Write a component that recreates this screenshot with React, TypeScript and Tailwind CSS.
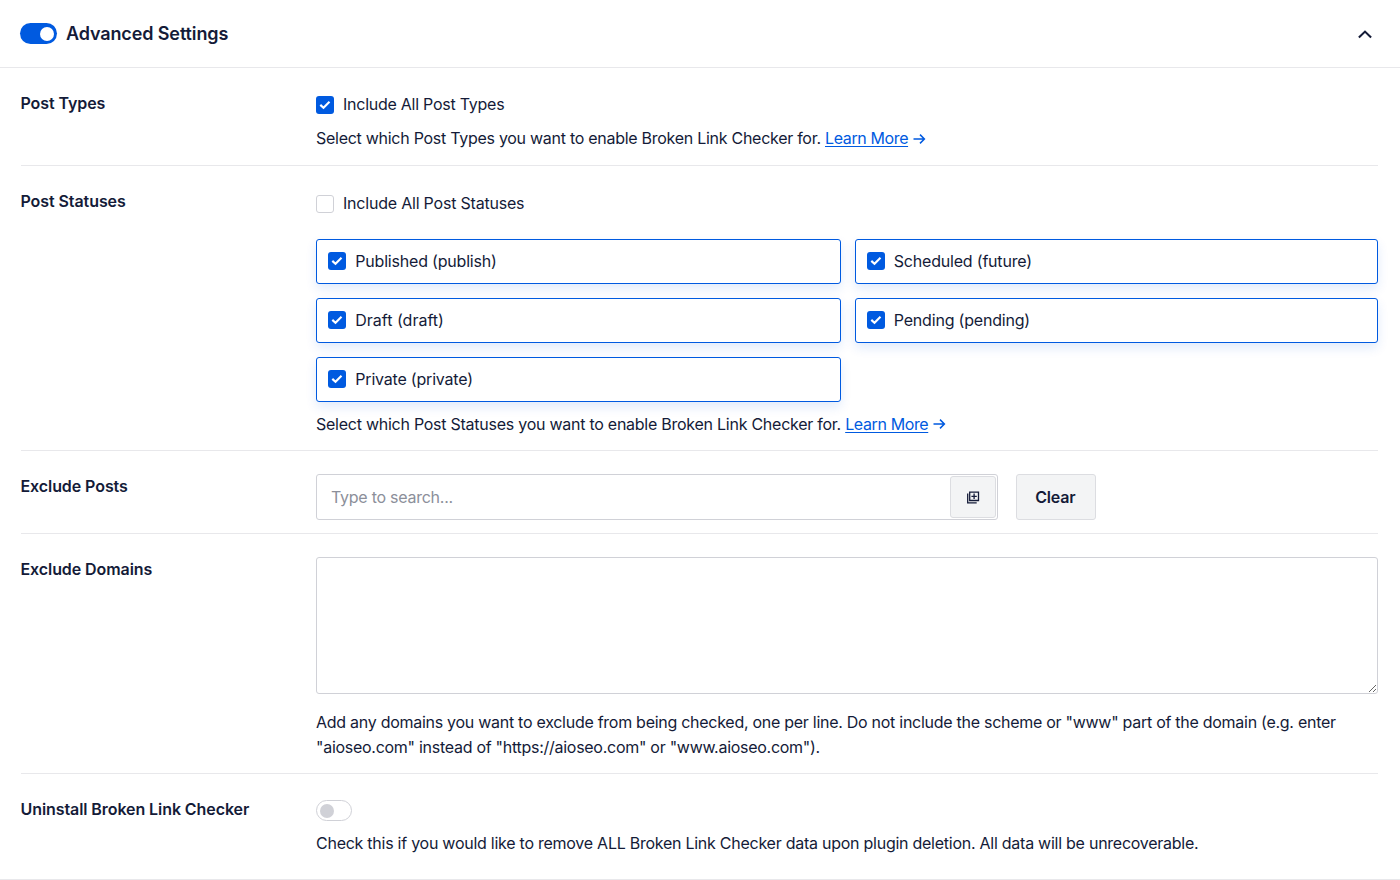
import type { ReactNode } from "react";

function Checkbox({ checked }: { checked?: boolean }) {
  return checked ? (
    <span className="flex size-[18px] shrink-0 items-center justify-center rounded-[3px] bg-[#005ae0]">
      <svg width="12" height="10" viewBox="0 0 12 10" fill="none" stroke="#fff" strokeWidth="2.1">
        <path d="M1.3 4.9 4.5 7.8 10.5 1.8" />
      </svg>
    </span>
  ) : (
    <span className="size-[18px] shrink-0 rounded-[3px] border border-[#d0d1d7] bg-white" />
  );
}

function LearnMore() {
  return (
    <a className="text-[#005ae0]">
      <span className="tracking-[-0.38px] underline underline-offset-2">Learn More</span>
      <svg className="ml-[5px] inline-block align-[-0.5px]" width="13" height="12" viewBox="0 0 13 12" fill="none" stroke="currentColor" strokeWidth="1.5">
        <path d="M.5 6h11M7 1.6 11.4 6 7 10.4" />
      </svg>
    </a>
  );
}

function Row({ label, className, children }: { label: string; className: string; children: ReactNode }) {
  return (
    <section className={`flex border-b border-[#e8e8eb] ${className}`}>
      <h3 className="w-[295.5px] shrink-0 pt-[23px] text-[16px] leading-6 font-semibold tracking-[-0.08px]">{label}</h3>
      <div className="min-w-0 flex-1">{children}</div>
    </section>
  );
}

const statuses = ["Published (publish)", "Scheduled (future)", "Draft (draft)", "Pending (pending)", "Private (private)"];

export default function App() {
  return (
    <main className="h-[880px] w-[1400px] overflow-hidden bg-white font-['Inter',sans-serif] text-[16px] leading-[25px] tracking-[-0.255px] text-[#141b38]">
      <header className="flex h-[68px] items-center border-b border-[#e8e8eb] pr-7 pl-[20.4px]">
        <span className="flex h-[21px] w-[36.6px] items-center justify-end rounded-full bg-[#005ae0] pr-[3px]">
          <span className="size-[14px] rounded-full bg-white" />
        </span>
        <h2 className="ml-[9px] flex-1 text-[18px] font-semibold tracking-[-0.12px]">Advanced Settings</h2>
        <svg className="mt-px" width="14" height="9" viewBox="0 0 14 9" fill="none" stroke="#141b38" strokeWidth="2.1">
          <path d="M.9 7.6 7 1.6l6.1 6" />
        </svg>
      </header>
      <div className="pr-[22px] pl-[20.5px]">
        <Row label="Post Types" className="h-[98px]">
          <div className="mt-6 flex items-center gap-[9px]"><Checkbox checked />Include All Post Types</div>
          <p className="mt-[9px] tracking-[-0.275px]">Select which Post Types you want to enable Broken Link Checker for. <LearnMore /></p>
        </Row>
        <Row label="Post Statuses" className="h-[285px]">
          <div className="mt-[25px] flex items-center gap-[9px] tracking-[-0.21px]"><Checkbox />Include All Post Statuses</div>
          <div className="mt-[22.5px] grid grid-cols-[525px_1fr] gap-x-[13.5px] gap-y-[13.5px] tracking-[-0.2px]">
            {statuses.map((s) => (
              <div key={s} className="flex h-[45.5px] items-center gap-[9px] rounded-[3px] border border-[#005ae0] bg-white pl-[11.3px] shadow-[0_5px_11px_rgba(0,90,224,0.12)]">
                <Checkbox checked />
                <span className={s.startsWith("Draft") ? "tracking-normal" : ""}>{s}</span>
              </div>
            ))}
          </div>
          <p className="relative mt-[9.5px]">Select which Post Statuses you want to enable Broken Link Checker for. <LearnMore /></p>
        </Row>
        <Row label="Exclude Posts" className="h-[83px]">
          <div className="mt-[23px] flex">
            <div className="flex h-[46px] w-[682px] items-center rounded-[3px] border border-[#d0d1d7] pr-[1px] pl-[14px]">
              <span className="flex-1 text-[#8c8f9a]">Type to search...</span>
              <span className="flex h-[42px] w-[46px] items-center justify-center rounded-[3px] border border-[#dcdde1] bg-[#f3f4f5]">
                <svg width="13" height="13" viewBox="0 0 13 13" fill="none" stroke="#141b38" strokeWidth="1.3">
                  <path d="M2.7 1.1h8.8v8.4H2.7zM.7 2.5v9.4h9M7.1 2.6v5.4M4.4 5.3h5.4" />
                </svg>
              </span>
            </div>
            <button className="ml-[18px] h-[46px] w-[79.5px] rounded-[3px] border border-[#dcdde1] bg-[#f3f4f5] pr-px font-semibold tracking-[-0.2px]">Clear</button>
          </div>
        </Row>
        <Row label="Exclude Domains" className="h-[240px]">
          <textarea className="mt-[23px] block h-[137px] w-full resize rounded-[3px] border border-[#d0d1d7] bg-white" />
          <p className="mt-4 tracking-[-0.275px]">Add any domains you want to exclude from being checked, one per line. Do not include the scheme or "www" part of the domain (e.g. enter "aioseo.com" instead of "https://aioseo.com" or "www.aioseo.com").</p>
        </Row>
        <Row label="Uninstall Broken Link Checker" className="h-[105px] border-b-0">
          <span className="mt-[26px] flex h-[21px] w-[36px] items-center rounded-full border border-[#d0d1d7] pl-[3px]">
            <span className="size-[14px] rounded-full bg-[#d0d1d7]" />
          </span>
          <p className="mt-[10px]">Check this if you would like to remove ALL Broken Link Checker data upon plugin deletion. All data will be unrecoverable.</p>
        </Row>
      </div>
      <div className="h-px bg-[#e8e8eb]" />
    </main>
  );
}
